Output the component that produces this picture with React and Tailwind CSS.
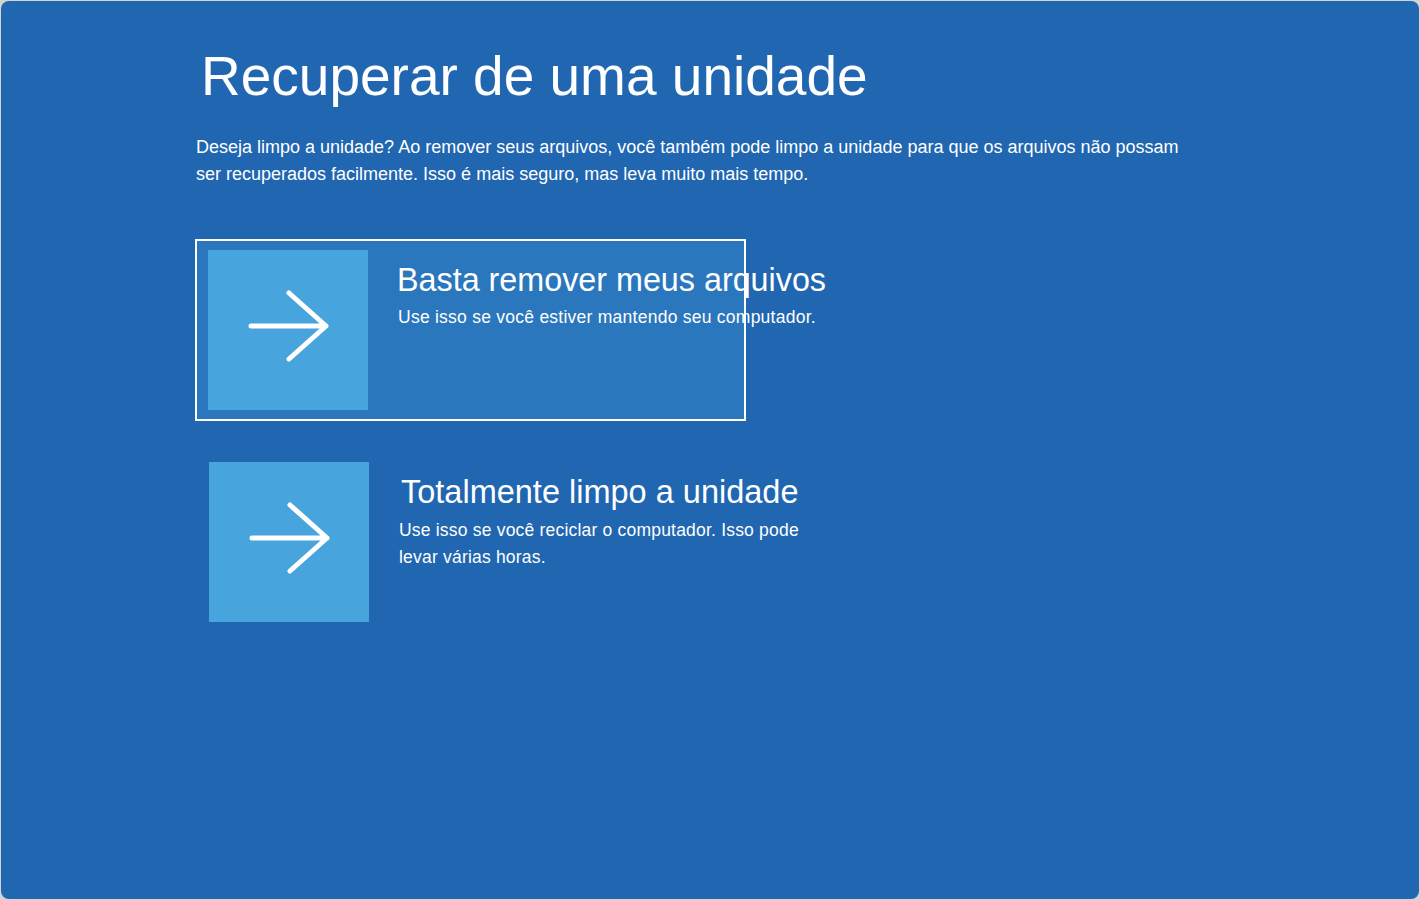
import React from "react";

function Arrow() {
  return (
    <svg width="160" height="160" viewBox="0 0 160 160" fill="none">
      <path d="M43 76 H118 M81 43 L118 76 L81 109" stroke="white" strokeWidth="5" strokeLinecap="round" strokeLinejoin="round" />
    </svg>
  );
}

export default function App() {
  return (
    <div className="w-[1420px] h-[900px] bg-[#d4d4d4] p-px" style={{ fontFamily: '"Liberation Sans", Arial, sans-serif' }}>
      <div className="w-full h-full bg-[#2066b1] rounded-[8px] text-white pl-[194px] pt-[43px]">
        <h1 className="text-[55px] leading-[64px] pl-[6px] font-normal">Recuperar de uma unidade</h1>
        <p className="mt-[26px] w-[992px] text-[18px] leading-[27px] pl-[1px] tracking-[0px]">
          Deseja limpo a unidade? Ao remover seus arquivos, você também pode limpo a unidade para que os arquivos não possam ser recuperados facilmente. Isso é mais seguro, mas leva muito mais tempo.
        </p>
        <div className="mt-[51px] relative w-[551px] h-[182px] border-2 border-white bg-[#2a77bd] flex">
          <div className="ml-[11px] mt-[9px] w-[160px] h-[160px] bg-[#48a4dd] flex-none">
            <Arrow />
          </div>
          <div className="ml-[29px] mt-[20px] whitespace-nowrap">
            <div className="text-[32.3px] leading-[38px]">Basta remover meus arquivos</div>
            <div className="text-[17.5px] leading-[27px] mt-[5px] pl-px tracking-[0.25px]">Use isso se você estiver mantendo seu computador.</div>
          </div>
        </div>
        <div className="mt-[41px] flex">
          <div className="ml-[14px] w-[160px] h-[160px] bg-[#48a4dd] flex-none">
            <Arrow />
          </div>
          <div className="ml-[30px] mt-[11px]">
            <div className="text-[32.5px] leading-[38px] pl-[2px]">Totalmente limpo a unidade</div>
            <div className="text-[17.5px] leading-[27px] mt-[6px] w-[420px] tracking-[0.2px]">Use isso se você reciclar o computador. Isso pode levar várias horas.</div>
          </div>
        </div>
      </div>
    </div>
  );
}
